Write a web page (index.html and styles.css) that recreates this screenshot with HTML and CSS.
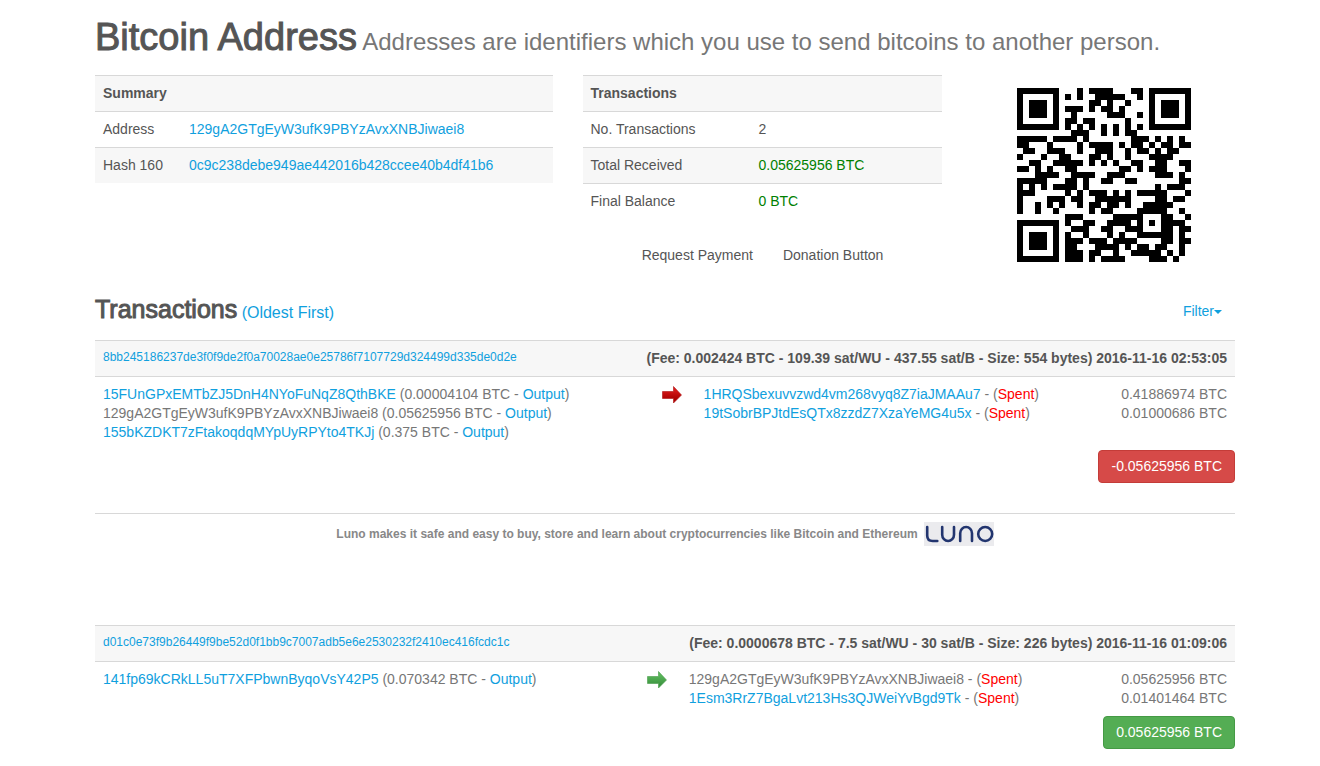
FILE: index.html
```html
<!DOCTYPE html>
<html lang="en">
<head>
    <meta charset="UTF-8">
    <meta name="viewport" content="width=device-width, initial-scale=1.0">
    <title>Bitcoin Address 129gA2GTgEyW3ufK9PBYzAvxXNBJiwaei8</title>
    <link rel="stylesheet" href="styles.css">
</head>
<body>
    <div class="container">
        <h1>Bitcoin Address<small> Addresses are identifiers which you use to send bitcoins to another person.</small></h1>

        <div class="row">
            <div class="col-5">
                <table class="table striped summary">
                    <tr><th colspan="2">Summary</th></tr>
                    <tr><td>Address</td><td><a href="#">129gA2GTgEyW3ufK9PBYzAvxXNBJiwaei8</a></td></tr>
                    <tr><td>Hash 160</td><td><a href="#">0c9c238debe949ae442016b428ccee40b4df41b6</a></td></tr>
                </table>
            </div>
            <div class="col-4">
                <table class="table striped totals">
                    <tr><th colspan="2">Transactions</th></tr>
                    <tr><td>No. Transactions</td><td>2</td></tr>
                    <tr><td>Total Received</td><td class="green">0.05625956 BTC</td></tr>
                    <tr><td>Final Balance</td><td class="green">0 BTC</td></tr>
                </table>
                <div class="actions">
                    <button class="btn-plain">Request Payment</button>
                    <button class="btn-plain">Donation Button</button>
                </div>
            </div>
            <div class="col-3">
                <svg class="qr" id="qr" viewBox="0 0 29 29" shape-rendering="crispEdges" role="img" aria-label="QR code"></svg>
            </div>
        </div>

        <div class="tx-heading">
            <h2>Transactions<a href="#"> (Oldest First)</a></h2>
            <button class="filter">Filter<span class="caret"></span></button>
        </div>

        <!-- transaction 1 -->
        <table class="table tx tx-out">
            <colgroup><col class="col-in"><col class="col-arrow"><col><col class="col-amount"></colgroup>
            <tr>
                <th colspan="4">
                    <div class="tx-title">
                        <a class="hash" href="#">8bb245186237de3f0f9de2f0a70028ae0e25786f7107729d324499d335de0d2e</a>
                        <span>(Fee: 0.002424 BTC - 109.39 sat/WU - 437.55 sat/B - Size: 554 bytes) 2016-11-16 02:53:05</span>
                    </div>
                </th>
            </tr>
            <tr>
                <td>
                    <a href="#">15FUnGPxEMTbZJ5DnH4NYoFuNqZ8QthBKE</a> (0.00004104 BTC - <a href="#">Output</a>)<br>
                    129gA2GTgEyW3ufK9PBYzAvxXNBJiwaei8 (0.05625956 BTC - <a href="#">Output</a>)<br>
                    <a href="#">155bKZDKT7zFtakoqdqMYpUyRPYto4TKJj</a> (0.375 BTC - <a href="#">Output</a>)
                </td>
                <td>
                    <svg class="arrow" viewBox="0 0 20 19">
                        <defs><linearGradient id="red" x1="0" y1="0" x2="0" y2="1"><stop offset="0.2" stop-color="#d81a1a"/><stop offset="0.8" stop-color="#a80000"/></linearGradient></defs>
                        <path d="M0.5 6.5H11.5V1.5L19.5 10L11.5 18V13.5H0.5Z" fill="url(#red)" stroke="#b01010" stroke-width="0.6"/>
                    </svg>
                </td>
                <td>
                    <a href="#">1HRQSbexuvvzwd4vm268vyq8Z7iaJMAAu7</a> - (<span class="spent">Spent</span>)<br>
                    <a href="#">19tSobrBPJtdEsQTx8zzdZ7XzaYeMG4u5x</a> - (<span class="spent">Spent</span>)
                </td>
                <td class="amount">0.41886974 BTC<br>0.01000686 BTC</td>
            </tr>
        </table>
        <div class="total">
            <button class="btn btn-danger">-0.05625956 BTC</button>
        </div>

        <div class="promo">
            <span>Luno makes it safe and easy to buy, store and learn about cryptocurrencies like Bitcoin and Ethereum</span>
            <svg class="luno" viewBox="0 0 70 24" role="img" aria-label="Luno">
                <rect width="70" height="24" fill="#ebebee"/>
                <g fill="none" stroke="#22356f" stroke-width="2.6" stroke-linecap="round">
                    <path d="M3.2 5V13.5Q3.2 19 8.7 19H13.3"/>
                    <path d="M18.2 5V12.8A5.9 6.2 0 0 0 30 12.8V5"/>
                    <path d="M36.2 19V11.2A5.9 6.2 0 0 1 48 11.2V19"/>
                    <circle cx="61.2" cy="12" r="7"/>
                </g>
            </svg>
        </div>

        <!-- transaction 2 -->
        <table class="table tx tx-in">
            <colgroup><col class="col-in"><col class="col-arrow"><col><col class="col-amount"></colgroup>
            <tr>
                <th colspan="4">
                    <div class="tx-title">
                        <a class="hash" href="#">d01c0e73f9b26449f9be52d0f1bb9c7007adb5e6e2530232f2410ec416fcdc1c</a>
                        <span>(Fee: 0.0000678 BTC - 7.5 sat/WU - 30 sat/B - Size: 226 bytes) 2016-11-16 01:09:06</span>
                    </div>
                </th>
            </tr>
            <tr>
                <td>
                    <a href="#">141fp69kCRkLL5uT7XFPbwnByqoVsY42P5</a> (0.070342 BTC - <a href="#">Output</a>)
                </td>
                <td>
                    <svg class="arrow" viewBox="0 0 20 19">
                        <defs><linearGradient id="green" x1="0" y1="0" x2="0" y2="1"><stop offset="0.2" stop-color="#5cb85c"/><stop offset="0.8" stop-color="#3c9440"/></linearGradient></defs>
                        <path d="M0.5 6.5H11.5V1.5L19.5 10L11.5 18V13.5H0.5Z" fill="url(#green)" stroke="#489c4a" stroke-width="0.6"/>
                    </svg>
                </td>
                <td>
                    129gA2GTgEyW3ufK9PBYzAvxXNBJiwaei8 - (<span class="spent">Spent</span>)<br>
                    <a href="#">1Esm3RrZ7BgaLvt213Hs3QJWeiYvBgd9Tk</a> - (<span class="spent">Spent</span>)
                </td>
                <td class="amount">0.05625956 BTC<br>0.01401464 BTC</td>
            </tr>
        </table>
        <div class="total">
            <button class="btn btn-success">0.05625956 BTC</button>
        </div>
    </div>

    <script src="qr.js"></script>
</body>
</html>
```

FILE: styles.css
```css
* {
    box-sizing: border-box;
}
body {
    margin: 0;
    background-color: #fff;
    color: #555;
    font-family: "Helvetica Neue", "Liberation Sans", Arial, sans-serif;
    font-size: 14px;
    line-height: 19px;
}
a {
    color: #10a0de;
    text-decoration: none;
}
button {
    font: inherit;
    cursor: pointer;
}
.container {
    max-width: 1320px;
    margin: 0 auto;
    padding: 16px 85px 16px 95px;
}
h1, h2 {
    margin: 0;
    font-weight: 400;
    -webkit-text-stroke: 1px #555;
}
h1 {
    font-size: 38px;
    line-height: 42px;
    margin-bottom: 12px;
}
h1 small, h2 a {
    -webkit-text-stroke: 0;
}
h1 small {
    font-size: 24px;
    color: #777;
}
.row {
    display: flex;
    margin: 0 -15px;
}
.col-5, .col-4, .col-3 {
    padding: 0 15px;
}
.col-5 {
    width: 41.6667%;
}
.col-4 {
    width: 33.3333%;
}
.col-3 {
    width: 25%;
    padding-top: 13px;
    text-align: center;
}

/* tables */
.table {
    width: 100%;
    border-collapse: separate;
    border-spacing: 0;
    table-layout: fixed;
}
.table th, .table td {
    padding: 8px;
    border-top: 1px solid #d8d8d8;
    text-align: left;
    vertical-align: top;
}
.table th, .striped tr:nth-child(odd) td {
    background-color: #f7f7f7;
}
.striped td:first-child {
    width: 86px;
    white-space: nowrap;
}
.table.striped {
    table-layout: auto;
}
.totals td:first-child {
    width: 168px;
}
.green {
    color: #008000;
}
.actions {
    display: flex;
    justify-content: center;
    gap: 30px;
    margin-top: 27px;
}
.btn-plain, .filter {
    padding: 0;
    border: 0;
    background: none;
    color: #555;
}
.qr {
    width: 174px;
    height: 174px;
}

/* transactions */
.tx-heading {
    display: flex;
    justify-content: space-between;
    align-items: center;
    margin: 27px 0 12px;
    padding-right: 13px;
}
h2 {
    font-size: 25px;
    line-height: 30px;
}
h2 a {
    font-size: 16px;
}
.filter {
    color: #10a0de;
}
.caret {
    display: inline-block;
    vertical-align: middle;
    border-top: 4px solid;
    border-left: 4px solid transparent;
    border-right: 4px solid transparent;
}
.tx td {
    color: #777;
    white-space: nowrap;
}
.tx-title {
    display: flex;
    justify-content: space-between;
}
.hash {
    font-size: 12px;
    line-height: 16px;
    font-weight: 400;
}
.tx-out .col-in {
    width: 49%;
}
.tx-in .col-in {
    width: 47.7%;
}
.col-arrow {
    width: 42px;
}
.col-amount {
    width: 130px;
}
.arrow {
    display: block;
    width: 20px;
    height: 19px;
}
.table .amount {
    text-align: right;
}
.spent {
    color: #f00;
}
.total {
    display: flex;
    justify-content: flex-end;
}
.btn {
    padding: 6px 12px;
    border: 1px solid;
    border-radius: 4px;
    color: #fff;
}
.btn-danger {
    background-color: #d64a48;
    border-color: #c43c38;
}
.btn-success {
    background-color: #54ad54;
    border-color: #459a45;
}
.promo {
    display: flex;
    justify-content: center;
    align-items: center;
    gap: 6px;
    margin: 30px 0 79px;
    padding-top: 8px;
    border-top: 1px solid #d8d8d8;
    color: #888;
    font-size: 12px;
    font-weight: 700;
}
.luno {
    width: 70px;
    height: 24px;
}
```

FILE: qr.js
```js
// QR code, version 3, level L, mask 2
const SIZE = 29;
const DATA_WORDS = 55;
const EC_WORDS = 15;
const FORMAT = "111110110101010";

function gfMul(a, b) {
    let r = 0;
    while (b) {
        if (b & 1) r ^= a;
        a <<= 1;
        if (a & 256) a ^= 0x11d;
        b >>= 1;
    }
    return r;
}

function errorWords(data) {
    // generator polynomial
    let gen = [1];
    let root = 1;
    for (let i = 0; i < EC_WORDS; i++) {
        const next = gen.concat(0);
        gen.forEach((g, j) => { next[j + 1] ^= gfMul(g, root); });
        gen = next;
        root = gfMul(root, 2);
    }
    const rest = data.concat(new Array(EC_WORDS).fill(0));
    for (let i = 0; i < data.length; i++) {
        const factor = rest[i];
        gen.forEach((g, j) => { rest[i + j] ^= gfMul(g, factor); });
    }
    return rest.slice(data.length);
}

function encode(text) {
    let bits = "0100" + text.length.toString(2).padStart(8, "0");
    for (const c of text) bits += c.charCodeAt(0).toString(2).padStart(8, "0");
    bits += "0000";
    const words = bits.match(/.{8}/g).map(b => parseInt(b, 2));
    for (let pad = 0xec; words.length < DATA_WORDS; pad ^= 0xfd) words.push(pad);
    return words.concat(errorWords(words));
}

function buildMatrix(text) {
    const m = Array.from({ length: SIZE }, () => new Array(SIZE).fill(null));

    function finder(top, left) {
        for (let y = -1; y <= 7; y++) {
            for (let x = -1; x <= 7; x++) {
                if (!m[top + y] || left + x < 0 || left + x >= SIZE) continue;
                const d = Math.max(Math.abs(x - 3), Math.abs(y - 3));
                m[top + y][left + x] = d !== 2 && d !== 4;
            }
        }
    }
    finder(0, 0);
    finder(0, SIZE - 7);
    finder(SIZE - 7, 0);

    // alignment and timing patterns
    for (let y = -2; y <= 2; y++) {
        for (let x = -2; x <= 2; x++) {
            m[22 + y][22 + x] = Math.max(Math.abs(x), Math.abs(y)) !== 1;
        }
    }
    for (let i = 8; i < SIZE - 8; i++) {
        m[6][i] = m[i][6] = i % 2 === 0;
    }

    // format bits
    for (let i = 0; i < 15; i++) {
        const on = FORMAT[i] === "1";
        if (i < 8) m[8][i < 6 ? i : i + 1] = on;
        else m[i === 8 ? 7 : 14 - i][8] = on;
        if (i < 7) m[SIZE - 1 - i][8] = on;
        else m[8][SIZE - 15 + i] = on;
    }
    m[SIZE - 8][8] = true;

    const bits = encode(text).map(w => w.toString(2).padStart(8, "0")).join("");
    let n = 0;
    let up = true;
    for (let right = SIZE - 1; right > 0; right -= 2) {
        if (right === 6) right = 5;
        for (let i = 0; i < SIZE; i++) {
            const y = up ? SIZE - 1 - i : i;
            for (const x of [right, right - 1]) {
                if (m[y][x] !== null) continue;
                m[y][x] = (bits[n++] === "1") !== (x % 3 === 0);
            }
        }
        up = !up;
    }
    return m;
}

let path = "";
buildMatrix("129gA2GTgEyW3ufK9PBYzAvxXNBJiwaei8").forEach((row, y) => {
    row.forEach((on, x) => {
        if (on) path += `M${x} ${y}h1v1h-1z`;
    });
});
document.getElementById("qr").innerHTML = `<path d="${path}"/>`;
```
